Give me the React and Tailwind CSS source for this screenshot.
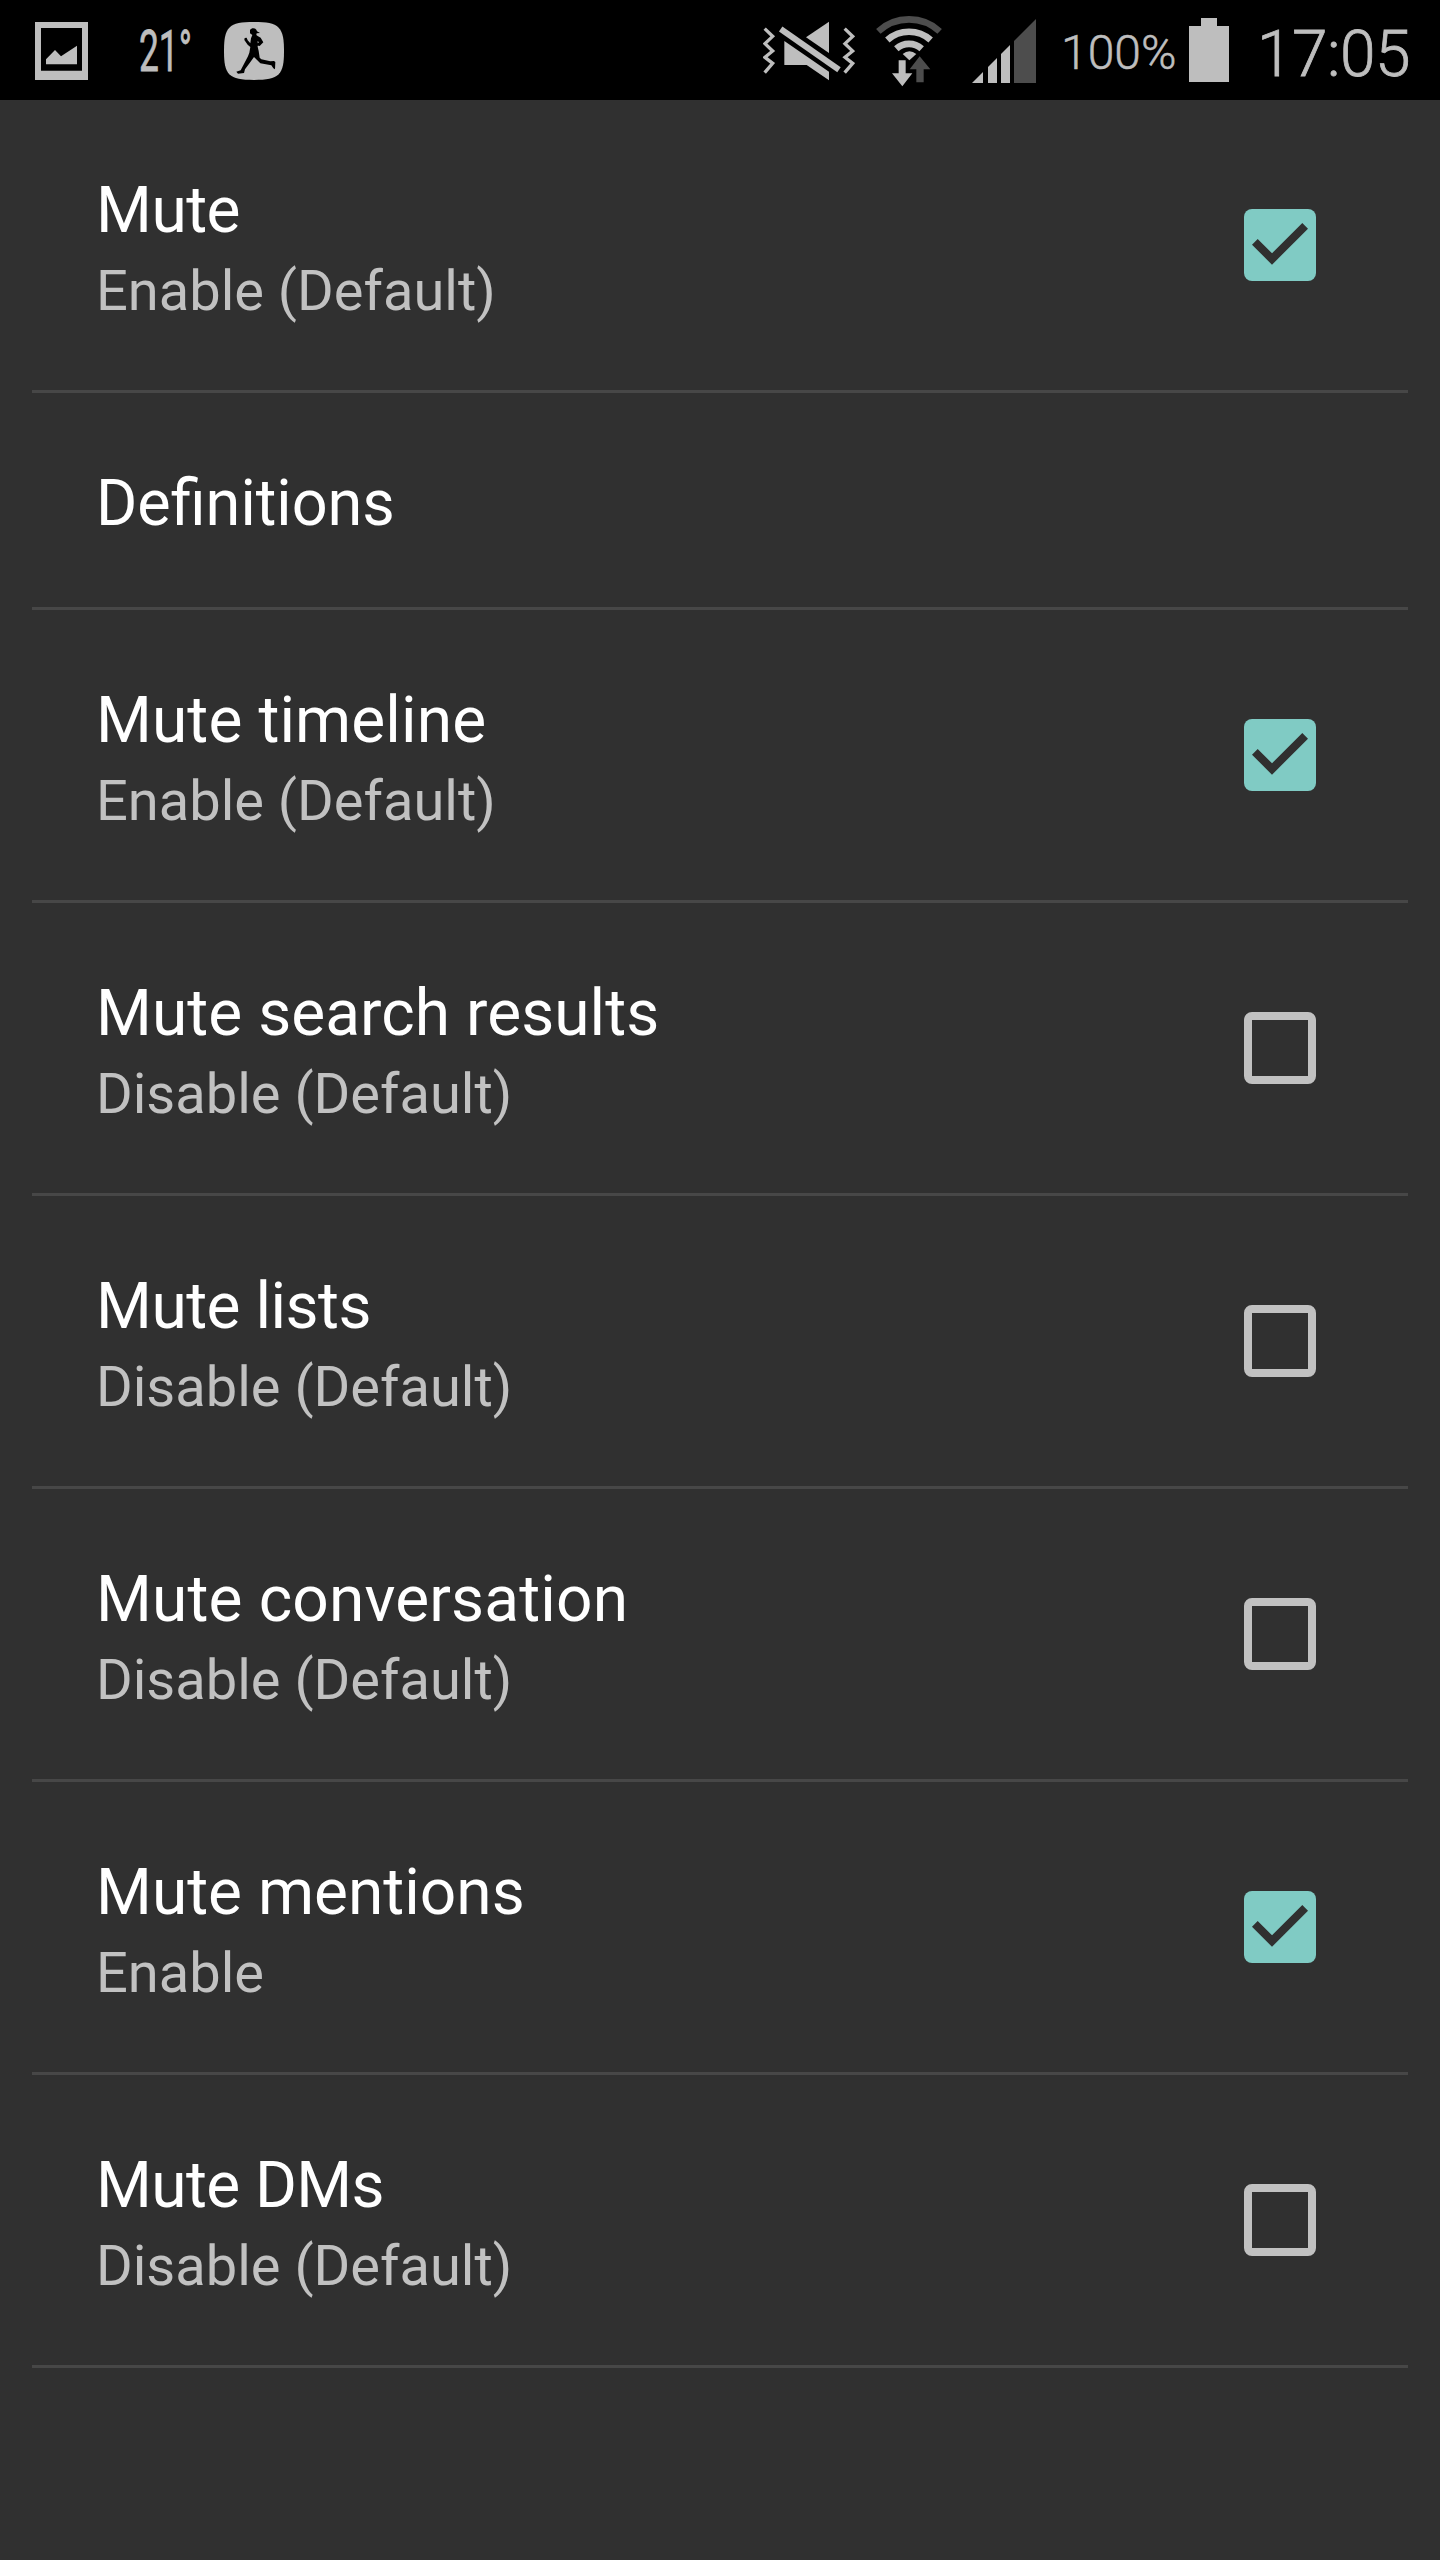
const settings = [
  { title: 'Mute', summary: 'Enable (Default)', checked: true, tracking: 'tracking-[-0.5px]' },
  { title: 'Definitions', tracking: 'origin-left scale-x-[0.984]' },
  { title: 'Mute timeline', summary: 'Enable (Default)', checked: true, tracking: 'tracking-[0.1px]' },
  { title: 'Mute search results', summary: 'Disable (Default)', checked: false, tracking: 'tracking-[0.05px]' },
  { title: 'Mute lists', summary: 'Disable (Default)', checked: false, tracking: 'tracking-[-0.5px]' },
  { title: 'Mute conversation', summary: 'Disable (Default)', checked: false, tracking: 'tracking-[0.15px]' },
  { title: 'Mute mentions', summary: 'Enable', checked: true, tracking: 'tracking-normal' },
  { title: 'Mute DMs', summary: 'Disable (Default)', checked: false, tracking: 'tracking-[-0.6px]' },
]

function ImageIcon() {
  return (
    <svg className="w-[53px] h-[58px]" viewBox="105 66 159 174" fill="#bebebe">
      <path fillRule="evenodd" d="M105 66H264V240H105ZM123 84V212H246V84Z" />
      <path d="M138 193V178L165 150L183 169L231 137V193Z" />
    </svg>
  )
}

function RunnerIcon() {
  return (
    <svg className="w-[60px] h-[58px]" viewBox="672 66 180 174">
      <path
        fill="#bebebe"
        d="M762 66C800 66 822 69 836 83C849 97 852 118 852 153C852 188 849 209 836 223C822 237 800 240 762 240C724 240 702 237 688 223C675 209 672 188 672 153C672 118 675 97 688 83C702 69 724 66 762 66Z"
      />
      <path
        fill="#000"
        d="M750 90C754 83 765 83 769 89L771 94L780 99L770 100L769 105L773 108L782 113L790 127L779 138L770 136L770 132L777 127L773 123L773 140L776 153L779 173L784 178L811 184L822 183L826 186L825 208L820 205L814 196L781 190L762 171L749 189L735 208L732 219L714 221L709 215L722 211L744 169L748 158L751 141L743 134L733 120L734 114L740 113L743 121L751 130L753 115L757 105L750 100Z"
      />
    </svg>
  )
}

function VibrateMuteIcon() {
  return (
    <svg className="w-[92px] h-[60px]" viewBox="69 63 276 180" fill="#bebebe">
      <g fill="none" stroke="#bebebe" strokeWidth="10">
        <path d="M74 86L98 109L75 131L98 153L75 172L98 190L74 218" />
        <path d="M314 86L338 109L315 131L338 153L315 172L338 190L314 218" />
        <path d="M122 87L297 209" strokeWidth="18" />
      </g>
      <path d="M267 65V159L198 112Z" />
      <path d="M133 123L267 215V241L200 195H133Z" />
    </svg>
  )
}

function WifiIcon() {
  return (
    <svg className="w-[66px] h-[72px]" viewBox="408 44 198 216">
      <g fill="none" stroke="#bebebe" strokeWidth="20">
        <path stroke="#4d4d4d" d="M415 93A136 136 0 0 1 599 93" />
        <path d="M442 119A98 98 0 0 1 572 119" />
        <path d="M469 145A57 57 0 0 1 545 145" />
      </g>
      <path fill="#bebebe" d="M488 161Q508 145 529 161L508 180Z" />
      <path fill="#bebebe" d="M476 180H497V219H517L487 258L456 219H476Z" />
      <path fill="#4d4d4d" d="M539 168L571 207H551V246H529V207H509Z" />
    </svg>
  )
}

function SignalIcon() {
  return (
    <svg className="w-[64px] h-[64px]" viewBox="696 57 192 192" fill="#bebebe">
      <path d="M696 249L729 216V249Z" />
      <path d="M744 249V201L771 174V249Z" />
      <path d="M783 249V162L810 135V249Z" />
      <path fill="#4d4d4d" d="M822 249V123L888 57V249Z" />
    </svg>
  )
}

function BatteryIcon() {
  return (
    <svg className="w-[40px] h-[64px]" viewBox="0 0 40 64" fill="#bebebe">
      <path d="M12 0H28V8H40V64H0V8H12Z" />
    </svg>
  )
}

function StatusBar() {
  return (
    <div className="h-[100px] bg-black text-[#bebebe] flex items-start justify-between pl-[35px] pr-[30px]">
      <div className="flex items-start">
        <div className="mt-[22px]"><ImageIcon /></div>
        <div className="ml-[51px] w-[85px] mt-[22px] text-[57px] leading-[60px] [-webkit-text-stroke:0.8px_#bebebe] whitespace-nowrap origin-left scale-x-[0.62]">21°</div>
        <div className="mt-[22px]"><RunnerIcon /></div>
      </div>
      <div className="flex items-start">
        <div className="mt-[21px]"><VibrateMuteIcon /></div>
        <div className="mt-[15px] ml-[21px]"><WifiIcon /></div>
        <div className="mt-[19px] ml-[30px]"><SignalIcon /></div>
        <div className="mt-[23px] ml-[25px] w-[128px] text-[48px] leading-[60px] font-light [-webkit-text-stroke:0.5px_#bebebe] whitespace-nowrap">100%</div>
        <div className="mt-[18px]"><BatteryIcon /></div>
        <div className="mt-[25px] ml-[28px] w-[153px] text-[64px] leading-[60px] font-light tracking-[-0.5px] [-webkit-text-stroke:0.8px_#bebebe] whitespace-nowrap">17:05</div>
      </div>
    </div>
  )
}

function Checkbox({ checked }) {
  if (!checked) {
    return <div className="w-[72px] h-[72px] rounded-[8px] border-8 border-[#c1c1c1]" />
  }
  return (
    <div className="w-[72px] h-[72px] rounded-[8px] bg-[#80cbc4]">
      <svg className="w-[72px] h-[72px]" viewBox="0 0 72 72">
        <path fill="#303030" d="M8 35.7L13.7 30L28 44.3L58.3 14L64 19.7L28 55.7Z" />
      </svg>
    </div>
  )
}

function SettingRow({ title, summary, checked, tracking }) {
  return (
    <div className={`${summary ? 'h-[293px]' : 'h-[217px]'} mx-8 pl-16 pr-[92px] border-b-3 border-[#474747] flex items-center justify-between`}>
      <div className="self-start pt-[73px] whitespace-nowrap">
        <div className={`text-[64px] leading-[75px] text-white ${tracking}`}>{title}</div>
        {summary && <div className="mt-[10px] text-[56px] leading-[66px] text-[#c1c1c1]">{summary}</div>}
      </div>
      {summary && <Checkbox checked={checked} />}
    </div>
  )
}

export default function App() {
  return (
    <div className="w-[1440px] h-[2560px] overflow-hidden bg-[#303030] font-['Roboto',sans-serif]">
      <StatusBar />
      {settings.map((item) => (
        <SettingRow key={item.title} {...item} />
      ))}
    </div>
  )
}
